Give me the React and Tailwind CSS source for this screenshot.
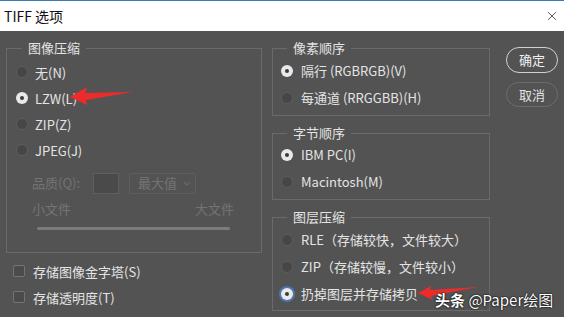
import { X } from "lucide-react";

const font = { fontFamily: '"Noto Sans CJK SC", "Noto Sans", sans-serif' };

const Radio = ({ checked, focused }) => (
  <span
    className={[
      "flex size-[12px] shrink-0 items-center justify-center rounded-full",
      checked
        ? "bg-[#e9e9e9]"
        : "border border-[#5d5d5d] bg-[#464646]",
      focused ? "ring-2 ring-[#4a86d8]/70" : "",
    ].join(" ")}
  >
    {checked && <span className="size-[4px] rounded-full bg-[#3a3a3a]" />}
  </span>
);

const RadioRow = ({ label, checked, focused, h = "h-[26px]", pad = "pl-[9px]", gap = "gap-[7px]" }) => (
  <div className={`flex items-center ${h} ${pad} ${gap}`}>
    <Radio checked={checked} focused={focused} />
    <span className="text-[13px] leading-none text-[#e4e4e4]">{label}</span>
  </div>
);

const Group = ({ title, className = "", ml = "ml-[15px]", children }) => (
  <fieldset className={`border border-[#6a6a6a] ${className}`}>
    <legend className={`${ml} px-[6px] text-[13px] leading-[16px] text-[#e4e4e4]`}>
      {title}
    </legend>
    {children}
  </fieldset>
);

const Check = ({ label }) => (
  <div className="flex h-[26px] items-center gap-[8px] pl-[7px]">
    <span className="size-[12px] rounded-[2px] border border-[#747474] bg-[#4b4b4b]" />
    <span className="text-[13px] leading-none text-[#e4e4e4]">{label}</span>
  </div>
);

export default function App() {
  return (
    <div className="relative h-[317px] w-[564px] overflow-hidden bg-[#535353]" style={font}>
      {/* title bar */}
      <div className="flex h-[31px] items-center justify-between border-t border-[#3d78b8] bg-white pl-[4px] pr-[5px]">
        <span className="text-[14px] text-[#111]">TIFF 选项</span>
        <X className="size-[14px] text-[#222]" strokeWidth={1.3} />
      </div>

      <div className="flex pl-[6px] pt-[9px]">
        {/* left column */}
        <div className="w-[256px]">
          <Group title="图像压缩" className="pb-[22px]">
            <div className="pt-[3px]">
              <RadioRow label=" 无(N)" />
              <RadioRow label="LZW(L)" checked />
              <RadioRow label="ZIP(Z)" />
              <RadioRow label="JPEG(J)" />
            </div>
            <div className="mt-[7px] flex h-[26px] items-center pl-[25px] text-[13px] text-[#737373]">
              <span className="w-[61px]">品质(Q):</span>
              <span className="h-[21px] w-[26px] border border-[#5f5f5f] bg-[#4a4a4a]" />
              <span className="ml-[10px] flex h-[21px] w-[67px] items-center justify-between rounded-[2px] border border-[#5f5f5f] pl-[8px] pr-[4px]">
                <span>最大值</span>
                <svg width="8" height="5" viewBox="0 0 8 5" fill="none" stroke="#6a6a6a" strokeWidth="1.2">
                  <path d="M1 1l3 3 3-3" />
                </svg>
              </span>
            </div>
            <div className="mt-[5px] flex h-[16px] items-center justify-between pl-[25px] pr-[27px] text-[13px] text-[#737373]">
              <span>小文件</span>
              <span>大文件</span>
            </div>
            <div className="ml-[30px] mr-[31px] mt-[10px] h-[3px] rounded-full bg-[#7c7c7c]" />
          </Group>
          <div className="mt-[5px]">
            <Check label="存储图像金字塔(S)" />
            <Check label="存储透明度(T)" />
          </div>
        </div>

        {/* right column */}
        <div className="ml-[10px] w-[218px]">
          <Group title="像素顺序" ml="ml-[14px]" className="pb-[4px] pt-[1px]">
            <RadioRow label="隔行 (RGBRGB)(V)" checked h="h-[27px]" pad="pl-[8px]" gap="gap-[8px]" />
            <RadioRow label="每通道 (RRGGBB)(H)" h="h-[27px]" pad="pl-[8px]" gap="gap-[8px]" />
          </Group>
          <Group title="字节顺序" ml="ml-[14px]" className="mt-[9px] pb-[4px]">
            <RadioRow label="IBM PC(I)" checked h="h-[27px]" pad="pl-[8px]" gap="gap-[8px]" />
            <RadioRow label="Macintosh(M)" h="h-[27px]" pad="pl-[8px]" gap="gap-[8px]" />
          </Group>
          <Group title="图层压缩" ml="ml-[14px]" className="mt-[9px] pb-[3px] pt-[1px]">
            <RadioRow label="RLE（存储较快，文件较大）" h="h-[27px]" pad="pl-[8px]" gap="gap-[8px]" />
            <RadioRow label="ZIP（存储较慢，文件较小）" h="h-[27px]" pad="pl-[8px]" gap="gap-[8px]" />
            <RadioRow label="扔掉图层并存储拷贝" checked focused h="h-[27px]" pad="pl-[8px]" gap="gap-[8px]" />
          </Group>
        </div>

        {/* buttons */}
        <div className="ml-[16px] flex flex-col gap-[9px] pt-[7px]">
          <button
            type="button"
            className="flex h-[26px] w-[52px] items-center justify-center rounded-full border-[1.5px] border-[#d2d2d2] text-[13px] text-[#f0f0f0]"
          >
            确定
          </button>
          <button
            type="button"
            className="flex h-[25px] w-[52px] items-center justify-center rounded-full border-[1.5px] border-[#6c6c6c] text-[13px] text-[#e2e2e2]"
          >
            取消
          </button>
        </div>
      </div>

      {/* annotations */}
      <svg className="pointer-events-none absolute inset-0" width="564" height="317" viewBox="0 0 564 317">
        <polygon points="70,97 87,87 85,93 133,92 86,100 87,105" fill="#ee2b2b" />
        <polygon points="418,293 431,286 430,290 478,287 431,296 433,300" fill="#ee2b2b" />
      </svg>
      <div className="pointer-events-none absolute left-[435px] top-[289px] text-[15px] leading-[22px] text-white [text-shadow:0_0_2px_#000,0_0_1px_#000]">
        <span className="font-bold">头条</span> @Paper绘图
      </div>
    </div>
  );
}
